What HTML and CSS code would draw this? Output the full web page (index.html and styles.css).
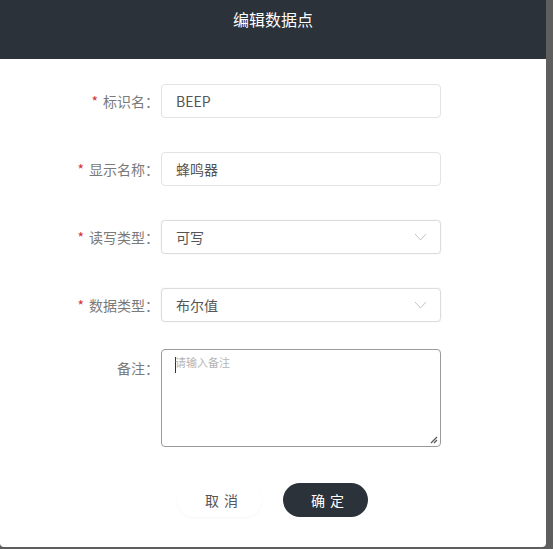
FILE: index.html
```html
<!DOCTYPE html>
<html lang="zh">
<head>
<meta charset="utf-8">
<title>编辑数据点</title>
<link rel="stylesheet" href="styles.css">
</head>
<body>
<div class="dialog">
  <div class="dialog-header">编辑数据点</div>
  <form class="dialog-body">
    <div class="row">
      <label class="label"><span class="req">*</span>标识名：</label>
      <div class="field input">BEEP</div>
    </div>
    <div class="row">
      <label class="label"><span class="req">*</span>显示名称：</label>
      <div class="field input">蜂鸣器</div>
    </div>
    <div class="row">
      <label class="label"><span class="req">*</span>读写类型：</label>
      <div class="field select">可写
        <svg class="chev" width="13" height="8" viewBox="0 0 13 8"><path d="M1 1 L6.5 7 L12 1" fill="none" stroke="#c6c6c6" stroke-width="1"/></svg>
      </div>
    </div>
    <div class="row">
      <label class="label"><span class="req">*</span>数据类型：</label>
      <div class="field select">布尔值
        <svg class="chev" width="13" height="8" viewBox="0 0 13 8"><path d="M1 1 L6.5 7 L12 1" fill="none" stroke="#c6c6c6" stroke-width="1"/></svg>
      </div>
    </div>
    <div class="row row-area">
      <label class="label">备注：</label>
      <div class="field area">
        <span class="caret"></span><span class="ph">请输入备注</span>
        <svg class="grip" width="8" height="8" viewBox="0 0 8 8"><path d="M7 1 L1 7 M7 4 L4 7" stroke="#555" stroke-width="1.2"/></svg>
      </div>
    </div>
    <div class="actions">
      <button type="button" class="btn btn-cancel">取消</button>
      <button type="button" class="btn btn-ok">确定</button>
    </div>
  </form>
</div>
</body>
</html>
```

FILE: styles.css
```css
html, body {
  margin: 0;
  padding: 0;
  background: #5e5e5e;
  width: 553px;
  height: 549px;
  overflow: hidden;
  font-family: "Noto Sans CJK SC", "Noto Sans", sans-serif;
}

.dialog {
  width: 546px;
  height: 547px;
  background: #fff;
  border-radius: 0 0 4px 4px;
  overflow: hidden;
}

.dialog-header {
  height: 59px;
  background: #2b3239;
  color: #fff;
  font-size: 16px;
  text-align: center;
  line-height: 38px;
}

.dialog-body {
  padding-top: 25px;
  margin: 0;
}

.row {
  display: flex;
  align-items: center;
  margin-bottom: 34px;
}

.row-area {
  align-items: flex-start;
  margin-top: -7px;
  margin-bottom: 36px;
}

.label {
  width: 159px;
  text-align: right;
  font-size: 14px;
  color: #7a7a7a;
  margin-right: 2px;
  white-space: nowrap;
}

.row-area .label {
  padding-top: 9px;
}

.req {
  color: #d0323a;
  margin-right: 5px;
  font-size: 14px;
}

.field {
  box-sizing: border-box;
  width: 280px;
  height: 34px;
  border: 1px solid #e3e3e3;
  border-radius: 4px;
  font-size: 14px;
  color: #555;
  padding-left: 14px;
  display: flex;
  align-items: center;
  position: relative;
}

.select {
  border: 1px solid #dcdcdc;
  box-shadow: 0 0 1px #d0d0d0;
  justify-content: space-between;
  padding-right: 13px;
}

.chev {
  display: block;
}

.area {
  height: 98px;
  border: 1px solid #9a9a9a;
  align-items: flex-start;
  padding-left: 13px;
  padding-top: 4px;
}

.caret {
  width: 1px;
  height: 16px;
  background: #333;
  margin-top: 3px;
}

.ph {
  font-size: 11px;
  color: #b5b5b5;
  margin-left: -1px;
}

.grip {
  position: absolute;
  right: 2px;
  bottom: 2px;
}

.actions {
  display: flex;
  gap: 21px;
  padding-left: 177px;
}

.btn {
  width: 85px;
  height: 34px;
  border-radius: 17px;
  border: none;
  font-family: "Noto Sans CJK SC", "Noto Sans", sans-serif;
  font-size: 14px;
  letter-spacing: 5px;
  padding: 0 0 0 9px;
  cursor: pointer;
}

.btn-cancel {
  background: #fff;
  color: #555;
  box-shadow: 0 1px 3px rgba(0,0,0,0.04);
}

.btn-ok {
  background: #2b3239;
  color: #fff;
}
```
